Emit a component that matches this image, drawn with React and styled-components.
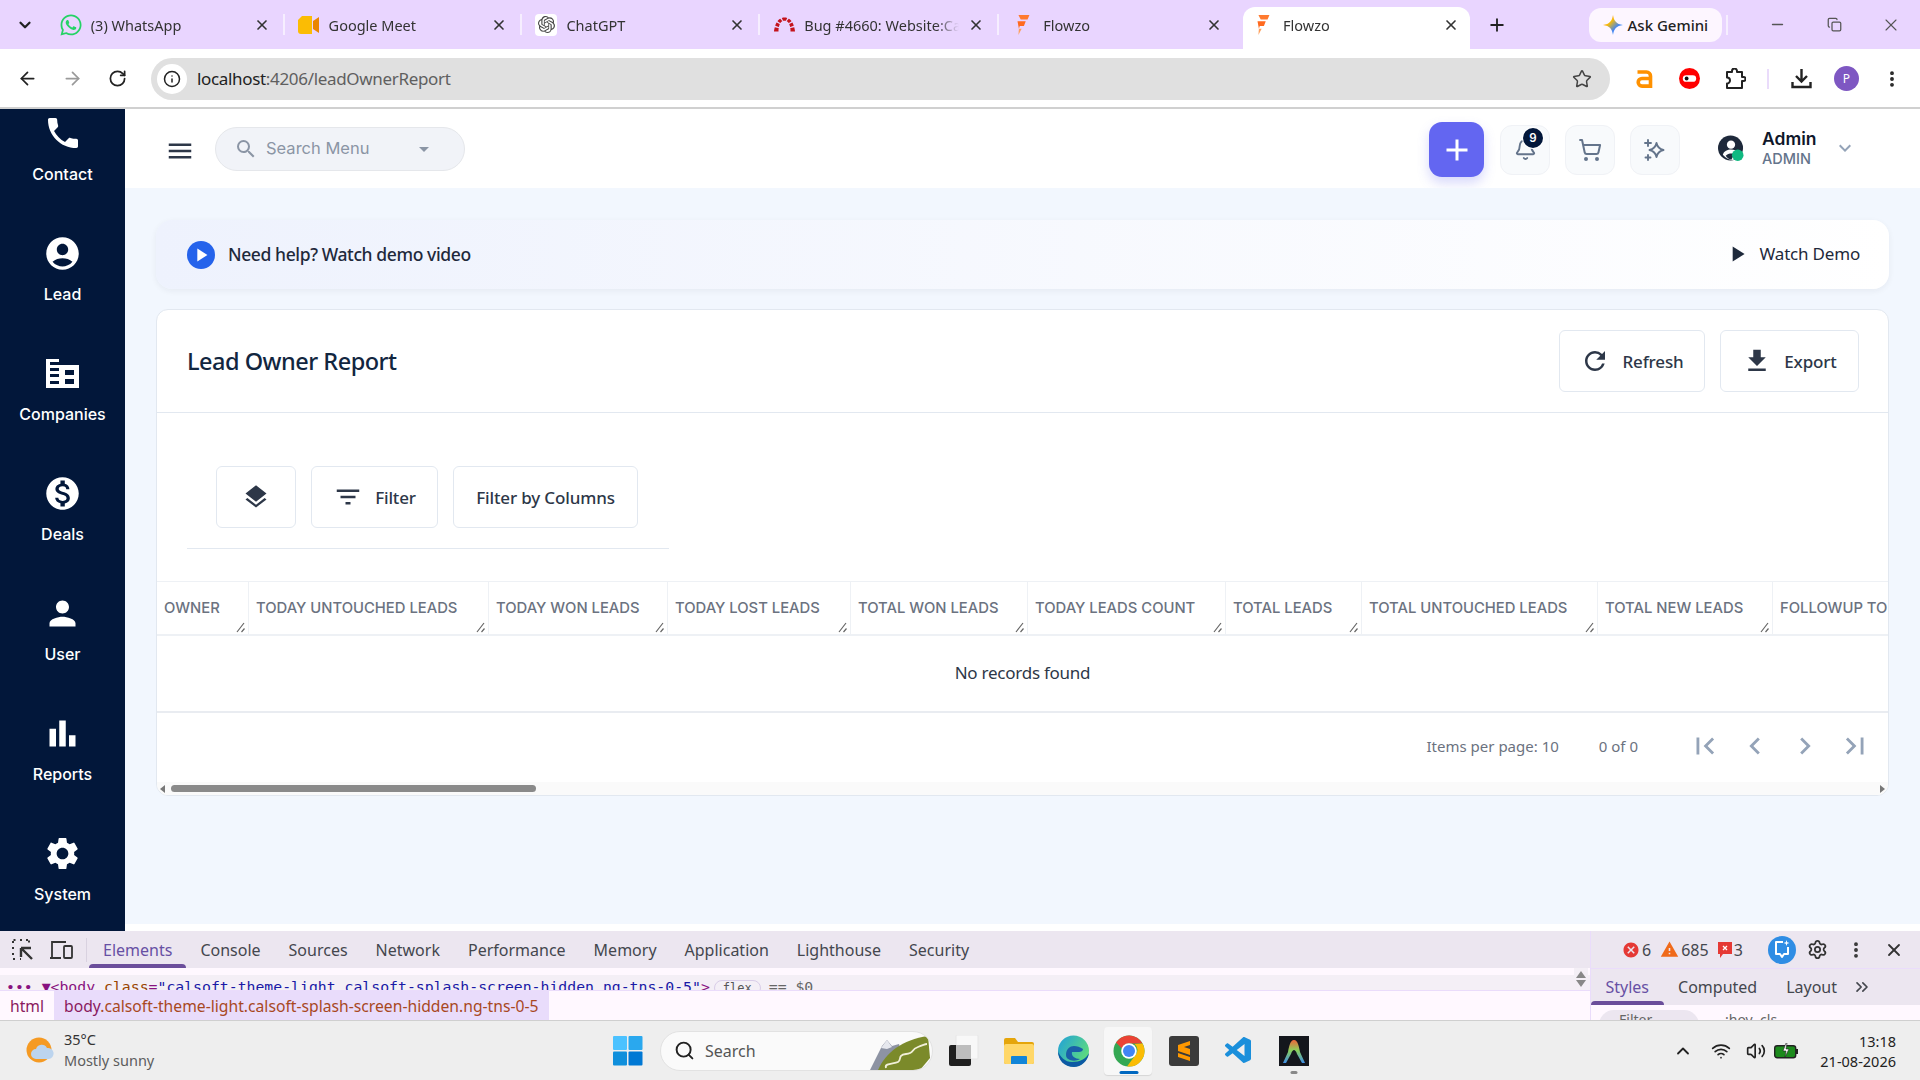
import React from 'react';
import styled, { createGlobalStyle } from 'styled-components';
import { FaWhatsapp } from 'react-icons/fa';
import { SiOpenai, SiRedmine } from 'react-icons/si';
import { VscVscode } from 'react-icons/vsc';
import {
  MdPhone, MdAccountCircle, MdMonetizationOn, MdPerson, MdBarChart, MdSettings, MdLayers,
  MdFilterList, MdRefresh, MdFileDownload, MdFirstPage, MdLastPage, MdChevronLeft, MdChevronRight,
  MdPlayArrow, MdMenu, MdSearch, MdArrowDropDown, MdAdd, MdKeyboardArrowDown, MdCancel, MdWarning,
} from 'react-icons/md';
import {
  ArrowLeft, ArrowRight, RotateCw, Info, Star, MoreVertical, Bell, ShoppingCart,
  Plus, Minus, X, ChevronDown, ChevronUp, ChevronsRight, Copy, Wifi, Volume2, Search, Settings,
} from 'lucide-react';

const GlobalStyle = createGlobalStyle`
  html, body { margin: 0; padding: 0; height: 100%; }
  body { font-family: "Noto Sans", "Liberation Sans", sans-serif; overflow: hidden; }
  * { box-sizing: border-box; }
`;

const Screen = styled.div`
  width: 1920px;
  height: 1080px;
  display: flex;
  flex-direction: column;
  overflow: hidden;
  background: #fff;
`;

/* browser chrome */
const TabStrip = styled.div`
  height: 49px;
  flex: none;
  background: #e9d5ff;
  display: flex;
  align-items: flex-end;
`;
const TabMenu = styled.div`
  width: 47px;
  height: 49px;
  display: flex;
  align-items: center;
  justify-content: center;
  padding-left: 3px;
  color: #222;
`;
const Tab = styled.div`
  width: 239px;
  height: 42px;
  padding: 0 15px 7px 13px;
  display: flex;
  align-items: center;
  gap: 9px;
  position: relative;
  font-size: 14.5px;
  color: #333;
  ${p => p.$active && `
    width: 228px;
    margin: 0 5px 0 6px;
    padding: 0 11px 7px 9px;
    background: #fff;
    border-radius: 12px 12px 0 0;
  `}
  ${p => p.$sep && `
    &::after {
      content: "";
      position: absolute;
      right: 0;
      top: 7px;
      height: 21px;
      width: 2px;
      background: #f6eeff;
    }
  `}
`;
const Favicon = styled.span`
  width: 22px;
  height: 22px;
  flex: none;
  display: flex;
  align-items: center;
  justify-content: center;
  background: ${p => p.$bg || 'transparent'};
  border-radius: 4px;
`;
const TabTitle = styled.span`
  flex: 1;
  white-space: nowrap;
  overflow: hidden;
  mask-image: linear-gradient(90deg, #000 85%, transparent);
`;
const NewTab = styled.div`
  width: 38px;
  height: 42px;
  padding-bottom: 7px;
  margin-left: 3px;
  display: flex;
  align-items: center;
  justify-content: center;
  color: #222;
`;
const GeminiPill = styled.div`
  margin-left: 73px;
  width: 134px;
  height: 34px;
  margin-bottom: 7px;
  background: #fdf6ff;
  border-radius: 12px;
  display: flex;
  align-items: center;
  justify-content: center;
  gap: 5px;
  font-size: 15px;
  font-weight: 500;
  color: #222;
`;
const WindowControls = styled.div`
  height: 49px;
  margin-left: 4px;
  flex: 1;
  display: flex;
  align-items: center;
  color: #555;
`;
const StripSep = styled.span`
  width: 2px;
  height: 20px;
  background: #f6eeff;
  margin-right: 21px;
`;
const WinBtn = styled.span`
  width: 57px;
  display: flex;
  justify-content: center;
`;

const Toolbar = styled.div`
  height: 60px;
  flex: none;
  padding: 1px 6px 0 5px;
  background: #fff;
  border-bottom: 2px solid #d0d0d0;
  display: flex;
  align-items: center;
`;
const NavBtn = styled.span`
  width: 45px;
  height: 42px;
  flex: none;
  display: flex;
  align-items: center;
  justify-content: center;
  color: ${p => (p.$muted ? '#9a9a9a' : '#222')};
`;
const AddressBar = styled.div`
  flex: 1;
  height: 42px;
  margin: 0 12px 0 11px;
  border-radius: 21px;
  background: #e0e0e0;
  display: flex;
  align-items: center;
  padding: 0 18px 0 6px;
  font-size: 17px;
  letter-spacing: -0.33px;
  color: #5f5f5f;
`;
const InfoBadge = styled.span`
  width: 30px;
  height: 30px;
  border-radius: 50%;
  background: #fff;
  display: flex;
  align-items: center;
  justify-content: center;
  color: #222;
  margin-right: 10px;
`;
const Host = styled.span`color: #222;`;
const AddressText = styled.span`flex: 1;`;
const ToolIcon = styled.span`
  width: 45px;
  height: 42px;
  flex: none;
  display: flex;
  align-items: center;
  justify-content: center;
  color: #222;
`;
const ToolSep = styled.span`
  width: 22px;
  display: flex;
  justify-content: center;
  &::before {
    content: "";
    width: 2px;
    height: 20px;
    background: #eadcfb;
  }
`;
const Avatar = styled.span`
  width: 25px;
  height: 25px;
  border-radius: 50%;
  background: #7e57c2;
  color: #fff;
  font-size: 12px;
  display: flex;
  align-items: center;
  justify-content: center;
`;

/* app */
const AppBody = styled.div`
  height: 822px;
  flex: none;
  display: flex;
  background: #fff;
`;
const Sidebar = styled.nav`
  width: 125px;
  flex: none;
  background: #02173a;
  overflow: hidden;
`;
const SideList = styled.div`
  margin-top: -16px;
  display: flex;
  flex-direction: column;
`;
const SideItem = styled.div`
  height: 120px;
  flex: none;
  display: flex;
  flex-direction: column;
  align-items: center;
  padding-top: 20px;
  color: #fff;
  font-family: Inter, sans-serif;
  font-size: 16px;
  font-weight: 500;
`;
const SideIcon = styled.span`
  height: 40px;
  margin-bottom: 11px;
  display: flex;
  align-items: center;
  justify-content: center;
`;
const Main = styled.div`
  flex: 1;
  min-width: 0;
  display: flex;
  flex-direction: column;
  padding-bottom: 7px;
`;
const Header = styled.header`
  height: 79px;
  flex: none;
  background: #fff;
  display: flex;
  align-items: center;
  padding: 0 0 0 40px;
  font-family: Inter, sans-serif;
`;
const Hamburger = styled.span`
  width: 30px;
  height: 30px;
  margin-top: 4px;
  display: flex;
  align-items: center;
  justify-content: center;
  color: #2d3748;
`;
const SearchPill = styled.div`
  width: 250px;
  height: 44px;
  margin-left: 20px;
  border-radius: 22px;
  background: #f1f3f8;
  border: 1px solid #e5e7eb;
  display: flex;
  align-items: center;
  padding: 0 28px 0 18px;
  color: #8b95a5;
  font-size: 16.5px;
`;
const SearchLabel = styled.span`
  flex: 1;
  margin-left: 8px;
  margin-top: -2px;
`;
const HeaderRight = styled.div`
  margin-left: auto;
  display: flex;
  align-items: center;
  gap: 15px;
  margin-top: 2px;
`;
const AddBtn = styled.span`
  width: 55px;
  height: 55px;
  margin-right: 1px;
  border-radius: 13px;
  background: #6366f1;
  color: #fff;
  display: flex;
  align-items: center;
  justify-content: center;
  box-shadow: 0 6px 12px rgba(99, 102, 241, 0.25);
`;
const IconTile = styled.span`
  width: 50px;
  height: 50px;
  border-radius: 12px;
  background: #f8fafc;
  border: 1px solid #f0f2f6;
  position: relative;
  display: flex;
  align-items: center;
  justify-content: center;
  color: #64748b;
`;
const Badge = styled.span`
  position: absolute;
  top: 2px;
  right: 6px;
  width: 20px;
  height: 20px;
  border-radius: 50%;
  background: #02173a;
  color: #fff;
  font-size: 11.5px;
  font-weight: 600;
  display: flex;
  align-items: center;
  justify-content: center;
  box-shadow: 0 0 0 1px #fff;
`;
const UserBox = styled.div`
  display: flex;
  align-items: center;
  margin: -4px 63px 0 23px;
`;
const UserGlyph = styled.span`
  width: 26px;
  height: 26px;
  margin-right: 18px;
  display: flex;
`;
const UserNames = styled.div`
  width: 71px;
  display: flex;
  flex-direction: column;
  gap: 1px;
`;
const UserName = styled.span`
  font-size: 17.5px;
  line-height: 21px;
  font-weight: 600;
  color: #0f172a;
`;
const UserRole = styled.span`
  font-size: 14.5px;
  line-height: 17px;
  font-weight: 500;
  color: #64748b;
`;
const UserCaret = styled.span`
  display: flex;
  color: #94a3b8;
`;

const Content = styled.main`
  flex: 1;
  background: #f2f7fe;
  padding: 32px 31px 0;
  display: flex;
  flex-direction: column;
  gap: 20px;
`;
const Banner = styled.div`
  height: 69px;
  flex: none;
  border-radius: 16px;
  background: linear-gradient(90deg, #eef2fd 0%, #ffffff 100%);
  box-shadow: 0 2px 6px rgba(30, 41, 59, 0.06);
  display: flex;
  align-items: center;
  padding: 0 29px 0 31px;
`;
const PlayCircle = styled.span`
  width: 28px;
  height: 28px;
  border-radius: 50%;
  background: #2563eb;
  color: #fff;
  display: flex;
  align-items: center;
  justify-content: center;
  margin-right: 13px;
`;
const BannerText = styled.span`
  flex: 1;
  font-size: 17.5px;
  letter-spacing: -0.39px;
  font-weight: 500;
  color: #1e293b;
  margin-top: -2px;
`;
const WatchDemo = styled.span`
  display: flex;
  align-items: center;
  gap: 10px;
  font-size: 17px;
  letter-spacing: -0.2px;
  color: #1e293b;
  margin-top: -2px;
`;
const Card = styled.section`
  height: 487px;
  flex: none;
  background: #fff;
  border: 1px solid #e2e8f0;
  border-radius: 12px;
  display: flex;
  flex-direction: column;
  overflow: hidden;
`;
const CardHead = styled.div`
  height: 103px;
  flex: none;
  border-bottom: 1px solid #e2e8f0;
  display: flex;
  align-items: center;
  padding: 0 29px 0 30px;
`;
const CardTitle = styled.h1`
  flex: 1;
  margin: 0;
  font-size: 23.5px;
  letter-spacing: -0.5px;
  font-weight: 500;
  color: #12263f;
`;
const OutlineBtn = styled.button`
  height: 62px;
  width: ${p => p.$w}px;
  flex: none;
  margin: 0;
  padding: 0;
  background: #fff;
  border: 1px solid #e2e8f0;
  border-radius: 6px;
  display: flex;
  align-items: center;
  justify-content: center;
  gap: 12px;
  font-family: "Noto Sans", sans-serif;
  font-size: 17px;
  letter-spacing: -0.15px;
  font-weight: 500;
  color: #2d3748;
`;
const BtnGroup = styled.div`
  display: flex;
  gap: 15px;
`;
const FilterRow = styled.div`
  flex: none;
  display: flex;
  gap: 15px;
  padding: 53px 0 20px 59px;
`;
const Divider = styled.div`
  width: 482px;
  height: 1px;
  flex: none;
  margin: 0 0 32px 30px;
  background: #e2e8f0;
`;
const TableHead = styled.div`
  height: 55px;
  flex: none;
  display: flex;
  overflow: hidden;
  border-top: 1px solid #eef1f5;
  border-bottom: 2px solid #eef1f5;
`;
const HeadCell = styled.div`
  width: ${p => p.$w}px;
  flex: none;
  position: relative;
  padding: 0 0 0 7px;
  display: flex;
  align-items: center;
  white-space: nowrap;
  border-right: 1px solid #eef1f5;
  font-family: Inter, sans-serif;
  font-size: 14.8px;
  font-weight: 500;
  color: #6b7280;
`;
const Grip = styled.svg`
  position: absolute;
  right: 2px;
  bottom: 1px;
`;
const EmptyRow = styled.div`
  height: 77px;
  flex: none;
  border-bottom: 2px solid #e9ecf1;
  display: flex;
  align-items: center;
  justify-content: center;
  font-size: 17px;
  letter-spacing: -0.25px;
  color: #2d3748;
  padding-bottom: 2px;
`;
const Pager = styled.div`
  height: 69px;
  flex: none;
  display: flex;
  align-items: center;
  justify-content: flex-end;
  padding: 0 8px 4px 0;
  font-size: 15px;
  color: #6b7280;
`;
const PageInfo = styled.span`
  margin-right: ${p => p.$gap}px;
`;
const PageBtn = styled.span`
  width: 50px;
  display: flex;
  justify-content: center;
  color: #94a3b8;
`;
const HScroll = styled.div`
  flex: 1;
  background: #fafafa;
  display: flex;
  align-items: flex-start;
  padding: 3px 3px 0;
`;
const ScrollArrow = styled.span`
  width: 0;
  height: 0;
  border-top: 4px solid transparent;
  border-bottom: 4px solid transparent;
  ${p => (p.$right ? 'border-left: 5px solid #777; margin-left: auto;' : 'border-right: 5px solid #777;')}
`;
const ScrollThumb = styled.span`
  width: 365px;
  height: 7px;
  margin-left: 6px;
  border-radius: 4px;
  background: #8a8a8a;
`;

/* devtools */
const Devtools = styled.div`
  height: 89px;
  flex: none;
  display: flex;
  background: #fff8ff;
  overflow: hidden;
`;
const DevLeft = styled.div`
  flex: 1;
  min-width: 0;
  display: flex;
  flex-direction: column;
`;
const DevTabs = styled.div`
  height: 37px;
  flex: none;
  background: #ece6f0;
  display: flex;
  align-items: center;
  padding-left: 3px;
  font-size: 16px;
  color: #44474e;
`;
const DevIcon = styled.span`
  width: 39px;
  display: flex;
  justify-content: center;
  color: #333;
`;
const DevSep = styled.span`
  width: 1px;
  height: 24px;
  margin: 0 2px 0 5px;
  background: #d9d2e0;
`;
const DevTab = styled.span`
  height: 37px;
  padding: 0 14px;
  display: flex;
  align-items: center;
  position: relative;
  color: ${p => (p.$active ? '#6750a4' : '#44474e')};
  ${p => p.$active && `
    &::after {
      content: "";
      position: absolute;
      left: 0;
      right: 0;
      bottom: 0;
      height: 4px;
      border-radius: 4px 4px 0 0;
      background: #6b4e9b;
    }
  `}
`;
const DomRow = styled.div`
  height: 22px;
  flex: none;
  padding: 10px 0 0 6px;
  overflow: hidden;
  position: relative;
  background: linear-gradient(#fff8ff 0 7px, #f4eff6 7px);
  font-family: "DejaVu Sans Mono", monospace;
  font-size: 14.8px;
  line-height: 18px;
  white-space: nowrap;
  color: #881280;
`;
const DomAttr = styled.span`color: #994500;`;
const DomVal = styled.span`color: #1a1aa6;`;
const FlexChip = styled.span`
  border: 1px solid #d9cde8;
  border-radius: 9px;
  padding: 0 8px;
  margin: 0 8px 0 4px;
  font-size: 12px;
  color: #555;
`;
const Muted = styled.span`color: #666;`;
const Crumbs = styled.div`
  flex: 1;
  display: flex;
  font-size: 15.7px;
  line-height: 30px;
  border-top: 1px solid #eadcfb;
`;
const Crumb = styled.span`
  padding: 0 10px;
  color: #8a1a5e;
  background: ${p => (p.$active ? '#e9dcfb' : 'transparent')};
`;
const CrumbClass = styled.span`color: #a8481f;`;
const ScrollKnob = styled.div`
  position: absolute;
  right: 2px;
  top: 0;
  width: 14px;
  height: 22px;
  background: #f4eff6;
  display: flex;
  flex-direction: column;
  align-items: center;
  justify-content: center;
  gap: 2px;
  &::before, &::after {
    content: "";
    border-left: 5px solid transparent;
    border-right: 5px solid transparent;
  }
  &::before { border-bottom: 7px solid #888; }
  &::after { border-top: 7px solid #888; }
`;
const DevRight = styled.div`
  width: 330px;
  flex: none;
  display: flex;
  flex-direction: column;
  border-left: 1px solid #eadcfb;
`;
const DevStatus = styled.div`
  height: 37px;
  flex: none;
  background: #ece6f0;
  display: flex;
  align-items: center;
  padding-left: 31px;
  font-size: 16px;
  color: #44474e;
`;
const Counter = styled.span`
  display: flex;
  align-items: center;
  gap: 2px;
  margin-right: 9px;
  color: ${p => p.$c};
`;
const CounterNum = styled.span`color: #44474e;`;
const StatusIcon = styled.span`
  width: 38px;
  display: flex;
  justify-content: center;
  color: #333;
`;
const AiCircle = styled.span`
  width: 28px;
  height: 28px;
  margin: 0 3px 0 16px;
  border-radius: 50%;
  background: #2f8de4;
  display: flex;
  align-items: center;
  justify-content: center;
`;
const PaneTabs = styled.div`
  height: 37px;
  flex: none;
  background: #ece6f0;
  display: flex;
  align-items: center;
  font-size: 16px;
  color: #44474e;
  border-top: 1px solid #eadcfb;
`;
const PaneTab = styled.span`
  height: 36px;
  padding: 0 14.5px;
  display: flex;
  align-items: center;
  position: relative;
  color: ${p => (p.$active ? '#6750a4' : '#44474e')};
  ${p => p.$active && `
    &::after {
      content: "";
      position: absolute;
      left: 0;
      right: 0;
      bottom: 0;
      height: 4px;
      border-radius: 4px 4px 0 0;
      background: #6b4e9b;
    }
  `}
`;
const FilterPeek = styled.div`
  flex: 1;
  padding: 5px 0 0 8px;
  display: flex;
  gap: 26px;
  align-items: flex-start;
  overflow: hidden;
  font-size: 14px;
  color: #666;
`;
const FilterChip = styled.span`
  width: 100px;
  height: 30px;
  border-radius: 15px;
  background: #ece6f0;
  padding-left: 20px;
`;

/* taskbar */
const Taskbar = styled.footer`
  height: 60px;
  flex: none;
  background: #eee;
  border-top: 1px solid #cfcfcf;
  display: flex;
  align-items: center;
  padding-left: 26px;
`;
const Weather = styled.div`
  width: 587px;
  display: flex;
  align-items: center;
  gap: 10px;
`;
const WeatherText = styled.div`
  display: flex;
  flex-direction: column;
  gap: 3px;
  margin-top: -2px;
  font-size: 14.5px;
  line-height: 18px;
  color: #333;
`;
const WeatherSub = styled.span`color: #5c5c5c;`;
const TaskSearch = styled.div`
  width: 273px;
  height: 40px;
  margin-left: 17px;
  border-radius: 20px;
  background: #fafafa;
  border: 1px solid #e2e2e2;
  display: flex;
  align-items: center;
  padding-left: 13px;
  font-size: 16px;
  color: #555;
  gap: 10px;
  overflow: hidden;
`;
const TaskSearchText = styled.span`flex: 1;`;
const TaskApp = styled.span`
  width: 55px;
  height: 60px;
  flex: none;
  position: relative;
  display: flex;
  align-items: center;
  justify-content: center;
  ${p => p.$tile && `
    &::before {
      content: "";
      position: absolute;
      left: 3px;
      right: 4px;
      top: 6px;
      bottom: 6px;
      border-radius: 4px;
      background: #f7f7f7;
      box-shadow: 0 1px 1px rgba(0, 0, 0, 0.1);
    }
    & > svg { position: relative; }
  `}
  ${p => p.$dot && `
    &::after {
      content: "";
      position: absolute;
      bottom: 7px;
      left: 50%;
      transform: translateX(-50%);
      height: 3px;
      border-radius: 2px;
      width: ${p.$dot === 'on' ? 19 : 7}px;
      background: ${p.$dot === 'on' ? '#0067c0' : '#888'};
    }
  `}
`;
const TaskApps = styled.div`
  display: flex;
  margin-left: 3px;
`;
const Tray = styled.div`
  margin-left: auto;
  display: flex;
  align-items: center;
  color: #222;
  padding-right: 24px;
`;
const TrayIcon = styled.span`
  width: ${p => p.$w || 30}px;
  display: flex;
  justify-content: center;
`;
const Clock = styled.div`
  margin-left: 16px;
  display: flex;
  flex-direction: column;
  align-items: flex-end;
  gap: 2px;
  font-size: 14.5px;
  line-height: 18px;
  color: #222;
`;

const FlowzoLogo = () => (
  <svg width="18" height="22" viewBox="0 0 18 24">
    <path d="M4 1h12l-2 5H6.500z" fill="#ff7a2f" />
    <path d="M3 8h9l-2 5H5.500l-1 3z" fill="#ff6a1f" />
    <path d="M4.500 16h3l-3.500 7z" fill="#ffa05c" />
  </svg>
);
const MeetLogo = () => (
  <svg width="22" height="20" viewBox="0 0 22 20">
    <path d="M4 1h10v18H3a3 3 0 0 1-3-3V5z" fill="#fbbc04" />
    <path d="M15 6l6-4v16l-6-4z" fill="#ea8600" />
  </svg>
);
const GeminiStar = () => (
  <svg width="20" height="20" viewBox="0 0 24 24">
    <defs>
      <linearGradient id="gem" x1="0" y1="0" x2="1" y2="1">
        <stop offset="0" stopColor="#ea4335" />
        <stop offset="0.35" stopColor="#fbbc04" />
        <stop offset="0.65" stopColor="#4285f4" />
        <stop offset="1" stopColor="#34a0f0" />
      </linearGradient>
    </defs>
    <path d="M12 0c1 7 4 11 12 12-8 1-11 5-12 12-1-7-4-11-12-12 8-1 11-5 12-12z" fill="url(#gem)" />
  </svg>
);
const AmazonIcon = () => (
  <svg width="17" height="19" viewBox="0 0 17 19" fill="none" stroke="#ff9100" strokeWidth="3.600">
    <path d="M1.500 3h9a4 4 0 0 1 4 4v12" />
    <path d="M14 9.500H6a3.800 3.800 0 0 0 0 7.600h8" />
  </svg>
);
const RecordIcon = () => (
  <svg width="21" height="21" viewBox="0 0 22 22">
    <circle cx="11" cy="11" r="11" fill="#f00" />
    <rect x="4" y="7.500" width="14" height="7" rx="3.500" fill="#fff" />
    <circle cx="8" cy="11" r="2" fill="#111" />
  </svg>
);
const ExtensionIcon = () => (
  <svg width="22" height="22" viewBox="0 0 22 22" fill="none" stroke="#222" strokeWidth="2" strokeLinejoin="round">
    <path d="M3 4h5V3a2.500 2.500 0 0 1 5 0v1h5v5h1.500a2 2 0 0 1 0 4H18v7H3v-4.500a3 3 0 0 0 0-6z" />
  </svg>
);
const DownloadIcon = () => (
  <svg width="21" height="21" viewBox="0 0 21 21" fill="none" stroke="#222" strokeWidth="2.400">
    <path d="M10.500 1v12M5 8l5.500 5.500L16 8" />
    <path d="M1.500 14v5h18v-5" />
  </svg>
);
const CompaniesIcon = () => (
  <svg width="33" height="29" viewBox="0 0 33 29">
    <path fillRule="evenodd" fill="#fff" d="M0 0h13v6h20v23H0zM4 3v3h9V3zM4 9v3h9V9zM4 15v3h9v-3zM4 22v3h9v-3zM19 11v5h9v-5zM19 20v5h9v-5z" />
  </svg>
);
const SparkIcon = () => (
  <svg width="24" height="24" viewBox="0 0 24 24" fill="none" stroke="#64748b" strokeWidth="1.900" strokeLinejoin="round">
    <path d="M13.500 5c.8 4 2.600 6 7 7-4.400 1-6.200 3-7 7-.8-4-2.600-6-7-7 4.400-1 6.200-3 7-7z" />
    <path d="M5 2v6M2 5h6M5 17v5M2.500 19.500h5" strokeLinecap="round" />
  </svg>
);
const AdminGlyph = () => (
  <svg width="27" height="27" viewBox="0 0 27 27">
    <circle cx="13" cy="13" r="13" fill="#1e293b" />
    <circle cx="13.500" cy="9.500" r="4.300" fill="#fff" />
    <path d="M5 20c1-4 5-5.500 8.500-5.500 3 0 6 1 8.500 3l-6 8c-4 0-8-2-11-5.500z" fill="#fff" />
    <path d="M8 21c2-2 5-2.500 9-2l-3 6c-2.500 0-4.500-2-6-4z" fill="#1e293b" />
    <circle cx="20.500" cy="20.500" r="6" fill="#10b981" />
  </svg>
);
const InspectIcon = () => (
  <svg width="22" height="22" viewBox="0 0 22 22" fill="none" stroke="#333" strokeWidth="2">
    <path d="M1 4V1h3M8 1h2M14 1h3v3M1 8v2M1 14v2M1 20h3M8 20h1" strokeDasharray="2 1.500" />
    <path d="M9 9l10 0M9 9v9M9 9l11 11" strokeWidth="2.400" />
  </svg>
);
const DeviceIcon = () => (
  <svg width="23" height="20" viewBox="0 0 23 20" fill="none" stroke="#333" strokeWidth="1.800">
    <path d="M2 17V2h14M0 18h11" />
    <rect x="14" y="6" width="8" height="12" rx="1" />
  </svg>
);
const AiBubble = () => (
  <svg width="16" height="20" viewBox="0 0 16 20" fill="none" stroke="#fff" strokeWidth="2">
    <path d="M9 2H2v12h4l2 3 2-3h4V7" strokeLinejoin="round" />
    <path d="M12.500 0l.7 2.300L15.500 3l-2.300.7-.7 2.300-.7-2.300L9.500 3l2.300-.7z" fill="#fff" stroke="none" />
  </svg>
);
const WeatherIcon = () => (
  <svg width="28" height="28" viewBox="0 0 28 28">
    <circle cx="13" cy="13" r="12.500" fill="#f59a23" />
    <path d="M10 22a5 5 0 0 1 0-10 6 6 0 0 1 11-1 5.500 5.500 0 0 1 2 11z" fill="#bcd4ee" />
  </svg>
);
const WinLogo = () => (
  <svg width="30" height="30" viewBox="0 0 30 30">
    <rect width="14" height="14" rx="1" fill="#4cc2ff" />
    <rect x="15.500" width="14" height="14" rx="1" fill="#2aa8ee" />
    <rect y="15.500" width="14" height="14" rx="1" fill="#0f8fdc" />
    <rect x="15.500" y="15.500" width="14" height="14" rx="1" fill="#0078d4" />
  </svg>
);
const Scenery = () => (
  <svg width="64" height="38" viewBox="0 0 64 38">
    <path d="M2 38L14 14l5-6 5 6 7-2 7 26z" fill="#8d93a3" />
    <path d="M13 16l6-8 5 7-5 2z" fill="#e6e8ee" />
    <path d="M10 38c8-18 24-30 50-34l2 22-10 12z" fill="#7b8a2a" />
    <path d="M18 36c-2-5 8-4 12-6s-1-7 8-8 4-4 12-7 7-3 9-3" stroke="#f1efd8" strokeWidth="1.800" fill="none" />
  </svg>
);
const TaskView = () => (
  <svg width="32" height="32" viewBox="0 0 32 32">
    <rect x="8" y="0" width="22" height="24" rx="1" fill="#f8f8f8" stroke="#e6e6e6" />
    <rect x="1" y="10" width="22" height="21" rx="2" fill="#1f1f1f" />
    <rect x="8" y="10" width="15" height="14" fill="#bdbdbd" />
  </svg>
);
const FolderIcon = () => (
  <svg width="30" height="26" viewBox="0 0 30 26">
    <path d="M0 2a2 2 0 0 1 2-2h9l3 4h14a2 2 0 0 1 2 2v18a2 2 0 0 1-2 2H2a2 2 0 0 1-2-2z" fill="#e5a50a" />
    <rect y="6" width="30" height="20" rx="2" fill="#ffd768" />
    <path d="M8 18h14a1 1 0 0 1 1 1v7H7v-7a1 1 0 0 1 1-1z" fill="#1185d8" />
  </svg>
);
const EdgeIcon = () => (
  <svg width="31" height="32" viewBox="0 0 31 32">
    <defs>
      <linearGradient id="edge" x1="0" y1="0" x2="1" y2="0.600">
        <stop offset="0" stopColor="#1f9fdc" />
        <stop offset="1" stopColor="#5fdc7c" />
      </linearGradient>
    </defs>
    <circle cx="15.500" cy="16" r="15.500" fill="url(#edge)" />
    <path d="M31 18c-1 8-8 14-15 14C6 32 0 25 0 16c2 6 7 11 14 11 8 0 14-3 17-9z" fill="#0c59a4" />
    <path d="M8 20c0-6 4-9 8-9 3 0 6 1 9 3 0 2-2 3-4 3h-7c-1 4 3 7 8 7-3 2-7 2-10 1-3-1-4-3-4-5z" fill="#1a5fa8" />
  </svg>
);
const ChromeIcon = () => (
  <svg width="32" height="32" viewBox="0 0 32 32">
    <circle cx="16" cy="16" r="15.500" fill="#34a853" />
    <path d="M3 7.500A15.500 15.500 0 0 1 29.500 8.500H16a7.500 7.500 0 0 0-7 5z" fill="#ea4335" />
    <path d="M29.500 8.500A15.500 15.500 0 0 1 14 31.400L22.500 20A7.500 7.500 0 0 0 21.500 9z" fill="#fbbc04" />
    <circle cx="16" cy="16" r="7.800" fill="#fff" />
    <circle cx="16" cy="16" r="6" fill="#4285f4" />
  </svg>
);
const SublimeIcon = () => (
  <svg width="30" height="30" viewBox="0 0 30 30">
    <rect width="30" height="30" rx="3" fill="#3b3b3b" />
    <path d="M21 5L9 9v6l12 4v-6l-6-2 6-2zM9 17l12 4v4L9 21z" fill="#ff9800" />
  </svg>
);
const ArchIcon = () => (
  <svg width="30" height="30" viewBox="0 0 30 30">
    <defs>
      <linearGradient id="arc" x1="0" y1="0" x2="0" y2="1">
        <stop offset="0" stopColor="#f0653a" />
        <stop offset="0.45" stopColor="#8bd05a" />
        <stop offset="1" stopColor="#3f8ee8" />
      </linearGradient>
    </defs>
    <rect width="30" height="30" fill="#14161c" />
    <path d="M15 4c4 0 5 7 6 12l5 11h-3l-5-9c-1-3-2-4-3-4s-2 1-3 4l-5 9H4l5-11c1-5 2-12 6-12z" fill="url(#arc)" />
  </svg>
);
const Battery = () => (
  <svg width="24" height="16" viewBox="0 0 24 16">
    <rect x="0.700" y="2.700" width="21" height="12" rx="2.500" fill="#1c8a1c" stroke="#222" strokeWidth="1.400" />
    <rect x="22" y="6" width="2" height="5" fill="#222" />
    <path d="M12 0l-3 8h3l-1 6 4-8h-3l1-6z" fill="#fff" stroke="#222" strokeWidth="0.600" />
  </svg>
);
const FlagIcon = () => (
  <svg width="14" height="16" viewBox="0 0 14 16">
    <path d="M0 0h14v12H5l-3 4v-4H0z" fill="#e53935" />
    <path d="M5 4l4 4M9 4L5 8" stroke="#fff" strokeWidth="1.300" />
  </svg>
);
const GripMark = () => (
  <Grip width="10" height="12" viewBox="0 0 10 12" fill="none" stroke="#666" strokeWidth="1.200">
    <path d="M1 11L8 2M5.500 11L8.500 7.500" />
  </Grip>
);

const sideItems = [
  { label: 'Contact', icon: <MdPhone size={40} /> },
  { label: 'Lead', icon: <MdAccountCircle size={39} /> },
  { label: 'Companies', icon: <CompaniesIcon /> },
  { label: 'Deals', icon: <MdMonetizationOn size={39} /> },
  { label: 'User', icon: <MdPerson size={39} /> },
  { label: 'Reports', icon: <MdBarChart size={39} /> },
  { label: 'System', icon: <MdSettings size={39} /> },
];

const columns = [
  { title: 'OWNER', w: 92 },
  { title: 'TODAY UNTOUCHED LEADS', w: 240 },
  { title: 'TODAY WON LEADS', w: 179 },
  { title: 'TODAY LOST LEADS', w: 183 },
  { title: 'TOTAL WON LEADS', w: 177 },
  { title: 'TODAY LEADS COUNT', w: 198 },
  { title: 'TOTAL LEADS', w: 136 },
  { title: 'TOTAL UNTOUCHED LEADS', w: 236 },
  { title: 'TOTAL NEW LEADS', w: 175 },
  { title: 'FOLLOWUP TO', w: 190 },
];

const tabs = [
  { title: '(3) WhatsApp', icon: <FaWhatsapp size={24} color="#25d366" />, sep: true },
  { title: 'Google Meet', icon: <MeetLogo />, sep: true },
  { title: 'ChatGPT', icon: <SiOpenai size={17} color="#444" />, bg: '#fff', sep: true },
  { title: 'Bug #4660: Website:Calsoft', icon: <SiRedmine size={21} color="#c4141c" />, sep: true },
  { title: 'Flowzo', icon: <FlowzoLogo /> },
];

const devTabs = ['Console', 'Sources', 'Network', 'Performance', 'Memory', 'Application', 'Lighthouse', 'Security'];

export default function App() {
  return (
    <Screen>
      <GlobalStyle />
      <TabStrip>
        <TabMenu><ChevronDown size={18} strokeWidth={3} /></TabMenu>
        {tabs.map(t => (
          <Tab key={t.title} $sep={t.sep}>
            <Favicon $bg={t.bg}>{t.icon}</Favicon>
            <TabTitle>{t.title}</TabTitle>
            <X size={16} strokeWidth={2.5} />
          </Tab>
        ))}
        <Tab $active>
          <Favicon><FlowzoLogo /></Favicon>
          <TabTitle>Flowzo</TabTitle>
          <X size={16} strokeWidth={2.5} />
        </Tab>
        <NewTab><Plus size={20} strokeWidth={2.2} /></NewTab>
        <GeminiPill><GeminiStar />Ask Gemini</GeminiPill>
        <WindowControls>
          <StripSep />
          <WinBtn><Minus size={17} /></WinBtn>
          <WinBtn><Copy size={15} /></WinBtn>
          <WinBtn><X size={20} strokeWidth={1.3} /></WinBtn>
        </WindowControls>
      </TabStrip>

      <Toolbar>
        <NavBtn><ArrowLeft size={21} strokeWidth={2} /></NavBtn>
        <NavBtn $muted><ArrowRight size={21} strokeWidth={2} /></NavBtn>
        <NavBtn><RotateCw size={19} strokeWidth={2.2} /></NavBtn>
        <AddressBar>
          <InfoBadge><Info size={18} /></InfoBadge>
          <AddressText><Host>localhost</Host>:4206/leadOwnerReport</AddressText>
          <Star size={20} strokeWidth={1.8} color="#444" />
        </AddressBar>
        <ToolIcon><AmazonIcon /></ToolIcon>
        <ToolIcon><RecordIcon /></ToolIcon>
        <ToolIcon><ExtensionIcon /></ToolIcon>
        <ToolSep />
        <ToolIcon><DownloadIcon /></ToolIcon>
        <ToolIcon><Avatar>P</Avatar></ToolIcon>
        <ToolIcon><MoreVertical size={20} strokeWidth={2.6} /></ToolIcon>
      </Toolbar>

      <AppBody>
        <Sidebar>
          <SideList>
            {sideItems.map(item => (
              <SideItem key={item.label}>
                <SideIcon>{item.icon}</SideIcon>
                {item.label}
              </SideItem>
            ))}
          </SideList>
        </Sidebar>
        <Main>
          <Header>
            <Hamburger><MdMenu size={32} /></Hamburger>
            <SearchPill>
              <MdSearch size={24} />
              <SearchLabel>Search Menu</SearchLabel>
              <MdArrowDropDown size={24} />
            </SearchPill>
            <HeaderRight>
              <AddBtn><MdAdd size={36} /></AddBtn>
              <IconTile>
                <Bell size={23} strokeWidth={2} />
                <Badge>9</Badge>
              </IconTile>
              <IconTile><ShoppingCart size={24} strokeWidth={2} /></IconTile>
              <IconTile><SparkIcon /></IconTile>
              <UserBox>
                <UserGlyph><AdminGlyph /></UserGlyph>
                <UserNames>
                  <UserName>Admin</UserName>
                  <UserRole>ADMIN</UserRole>
                </UserNames>
                <UserCaret><MdKeyboardArrowDown size={24} /></UserCaret>
              </UserBox>
            </HeaderRight>
          </Header>
          <Content>
            <Banner>
              <PlayCircle><MdPlayArrow size={22} /></PlayCircle>
              <BannerText>Need help? Watch demo video</BannerText>
              <WatchDemo><MdPlayArrow size={26} color="#1e293b" />Watch Demo</WatchDemo>
            </Banner>
            <Card>
              <CardHead>
                <CardTitle>Lead Owner Report</CardTitle>
                <BtnGroup>
                  <OutlineBtn $w={146}><MdRefresh size={30} />Refresh</OutlineBtn>
                  <OutlineBtn $w={139}><MdFileDownload size={30} />Export</OutlineBtn>
                </BtnGroup>
              </CardHead>
              <FilterRow>
                <OutlineBtn $w={80}><MdLayers size={28} /></OutlineBtn>
                <OutlineBtn $w={127}><MdFilterList size={30} />Filter</OutlineBtn>
                <OutlineBtn $w={185}>Filter by Columns</OutlineBtn>
              </FilterRow>
              <Divider />
              <TableHead>
                {columns.map(c => (
                  <HeadCell key={c.title} $w={c.w}>
                    {c.title}
                    <GripMark />
                  </HeadCell>
                ))}
              </TableHead>
              <EmptyRow>No records found</EmptyRow>
              <Pager>
                <PageInfo $gap={40}>Items per page: 10</PageInfo>
                <PageInfo $gap={42}>0 of 0</PageInfo>
                <PageBtn><MdFirstPage size={34} /></PageBtn>
                <PageBtn><MdChevronLeft size={34} /></PageBtn>
                <PageBtn><MdChevronRight size={34} /></PageBtn>
                <PageBtn><MdLastPage size={34} /></PageBtn>
              </Pager>
              <HScroll>
                <ScrollArrow />
                <ScrollThumb />
                <ScrollArrow $right />
              </HScroll>
            </Card>
          </Content>
        </Main>
      </AppBody>

      <Devtools>
        <DevLeft>
          <DevTabs>
            <DevIcon><InspectIcon /></DevIcon>
            <DevIcon><DeviceIcon /></DevIcon>
            <DevSep />
            <DevTab $active>Elements</DevTab>
            {devTabs.map(t => <DevTab key={t}>{t}</DevTab>)}
          </DevTabs>
          <DomRow>
            ••• ▼&lt;body <DomAttr>class</DomAttr>=<DomVal>"calsoft-theme-light calsoft-splash-screen-hidden ng-tns-0-5"</DomVal>&gt;
            <FlexChip>flex</FlexChip><Muted>== $0</Muted>
            <ScrollKnob />
          </DomRow>
          <Crumbs>
            <Crumb>html</Crumb>
            <Crumb $active>body<CrumbClass>.calsoft-theme-light.calsoft-splash-screen-hidden.ng-tns-0-5</CrumbClass></Crumb>
          </Crumbs>
        </DevLeft>
        <DevRight>
          <DevStatus>
            <Counter $c="#e53935"><MdCancel size={18} /><CounterNum>6</CounterNum></Counter>
            <Counter $c="#f06a1a"><MdWarning size={19} /><CounterNum>685</CounterNum></Counter>
            <Counter $c="#e53935"><FlagIcon /><CounterNum>3</CounterNum></Counter>
            <AiCircle><AiBubble /></AiCircle>
            <StatusIcon><Settings size={21} /></StatusIcon>
            <StatusIcon><MoreVertical size={20} strokeWidth={2.6} /></StatusIcon>
            <StatusIcon><X size={20} strokeWidth={2.2} /></StatusIcon>
          </DevStatus>
          <PaneTabs>
            <PaneTab $active>Styles</PaneTab>
            <PaneTab>Computed</PaneTab>
            <PaneTab>Layout</PaneTab>
            <ChevronsRight size={20} />
          </PaneTabs>
          <FilterPeek>
            <FilterChip>Filter</FilterChip>
            <span>:hov .cls</span>
          </FilterPeek>
        </DevRight>
      </Devtools>

      <Taskbar>
        <Weather>
          <WeatherIcon />
          <WeatherText>
            <span>35°C</span>
            <WeatherSub>Mostly sunny</WeatherSub>
          </WeatherText>
        </Weather>
        <WinLogo />
        <TaskSearch>
          <Search size={21} strokeWidth={2.2} color="#222" />
          <TaskSearchText>Search</TaskSearchText>
          <Scenery />
        </TaskSearch>
        <TaskApps>
          <TaskApp><TaskView /></TaskApp>
          <TaskApp><FolderIcon /></TaskApp>
          <TaskApp><EdgeIcon /></TaskApp>
          <TaskApp $tile $dot="on"><ChromeIcon /></TaskApp>
          <TaskApp><SublimeIcon /></TaskApp>
          <TaskApp><VscVscode size={32} color="#1a8fdb" /></TaskApp>
          <TaskApp $dot="off"><ArchIcon /></TaskApp>
        </TaskApps>
        <Tray>
          <TrayIcon $w={30}><ChevronUp size={20} strokeWidth={2.2} /></TrayIcon>
          <TrayIcon $w={46}><Wifi size={20} /></TrayIcon>
          <TrayIcon $w={24}><Volume2 size={20} /></TrayIcon>
          <TrayIcon $w={36}><Battery /></TrayIcon>
          <Clock>
            <span>13:18</span>
            <span>21-08-2026</span>
          </Clock>
        </Tray>
      </Taskbar>
    </Screen>
  );
}
